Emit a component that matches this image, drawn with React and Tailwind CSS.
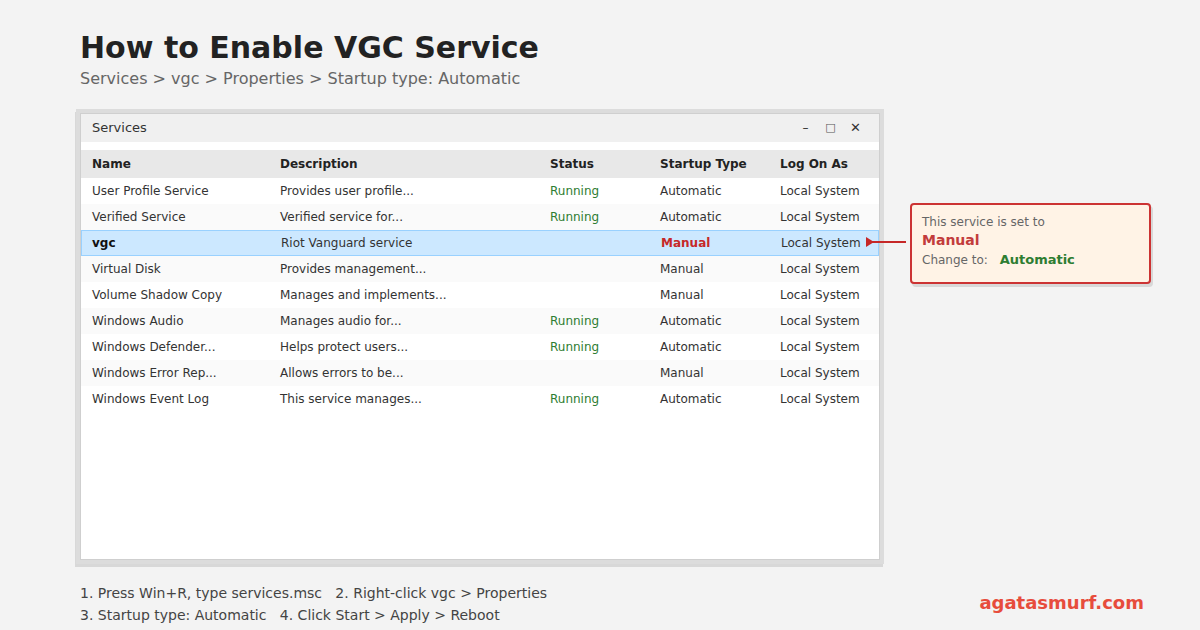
export default function App() {
  const rows = [
    ["User Profile Service", "Provides user profile...", "Running", "Automatic"],
    ["Verified Service", "Verified service for...", "Running", "Automatic"],
    ["vgc", "Riot Vanguard service", "", "Manual"],
    ["Virtual Disk", "Provides management...", "", "Manual"],
    ["Volume Shadow Copy", "Manages and implements...", "", "Manual"],
    ["Windows Audio", "Manages audio for...", "Running", "Automatic"],
    ["Windows Defender...", "Helps protect users...", "Running", "Automatic"],
    ["Windows Error Rep...", "Allows errors to be...", "", "Manual"],
    ["Windows Event Log", "This service manages...", "Running", "Automatic"],
  ];
  return (
    <div className="w-[1200px] h-[630px] bg-[#f3f3f3] relative overflow-hidden" style={{ fontFamily: '"DejaVu Sans", sans-serif' }}>
      <div className="pl-[80px] pt-[30px]">
        <div className="text-[30px] font-bold text-[#222] leading-[36px]">How to Enable VGC Service</div>
        <div className="text-[16px] text-[#666] mt-[1px]">Services &gt; vgc &gt; Properties &gt; Startup type: Automatic</div>
      </div>
      <div className="absolute left-[80px] top-[113px] w-[800px] h-[447px] bg-white border border-[#cfcfcf] shadow-[0_0_0_4px_#dcdcdc,-1px_3px_0_4px_#d8d8d8]">
        <div className="h-[28px] bg-[#f0f0f0] flex items-center px-[11px] text-[13px] text-[#333]">
          <span className="flex-1">Services</span>
          <span className="w-[25px] text-center text-[12px]">–</span>
          <span className="w-[25px] text-center text-[11px] text-[#555]">□</span>
          <span className="w-[25px] text-center text-[13px] font-bold">✕</span>
        </div>
        <div className="h-[8px]" />
        <div className="h-[28px] bg-[#e8e8e8] flex items-center text-[12px] font-bold text-[#222]">
          <span className="w-[199px] pl-[11px]">Name</span>
          <span className="w-[270px]">Description</span>
          <span className="w-[110px]">Status</span>
          <span className="w-[120px]">Startup Type</span>
          <span>Log On As</span>
        </div>
        {rows.map((r, i) => {
          const sel = r[0] === "vgc";
          return (
            <div key={i} className={`h-[26px] flex items-center text-[12px] text-[#333] ${sel ? "bg-[#cce8ff] border border-[#99d1ff]" : i % 2 ? "bg-[#fafafa]" : "bg-white"}`}>
              <span className={`w-[199px] ${sel ? "pl-[10px] font-bold text-[#111]" : "pl-[11px]"}`}>{r[0]}</span>
              <span className="w-[270px]">{r[1]}</span>
              <span className="w-[110px] text-[#2e7d32]">{r[2]}</span>
              <span className={`w-[120px] ${sel ? "font-bold text-[#c62828]" : ""}`}>{r[3]}</span>
              <span>Local System</span>
            </div>
          );
        })}
      </div>
      <svg className="absolute left-[864px] top-[236px]" width="44" height="12">
        <line x1="8" y1="6" x2="42" y2="6" stroke="#c62828" strokeWidth="2" />
        <polygon points="2,1 10,6 2,11" fill="#c62828" />
      </svg>
      <div className="absolute left-[910px] top-[203px] w-[241px] h-[81px] bg-[#fff3e6] border-2 border-[#cc3333] rounded-[4px] shadow-[2px_3px_0_#d8d8d8] px-[10px] pt-[9px]">
        <div className="text-[12px] text-[#666] leading-[16px]">This service is set to</div>
        <div className="text-[14px] font-bold text-[#c23b3b] leading-[20px]">Manual</div>
        <div className="text-[12px] text-[#666] mt-[2px] leading-[16px]">Change to: <span className="ml-[8px] font-bold text-[#2e7d32] text-[13px]">Automatic</span></div>
      </div>
      <div className="absolute left-[80px] top-[582px] text-[14px] text-[#444] leading-[22px]">
        <div>1. Press Win+R, type services.msc&nbsp;&nbsp; 2. Right-click vgc &gt; Properties</div>
        <div>3. Startup type: Automatic&nbsp;&nbsp; 4. Click Start &gt; Apply &gt; Reboot</div>
      </div>
      <div className="absolute right-[56px] top-[589px] text-[18px] font-bold text-[#e74c3c]">agatasmurf.com</div>
    </div>
  );
}
